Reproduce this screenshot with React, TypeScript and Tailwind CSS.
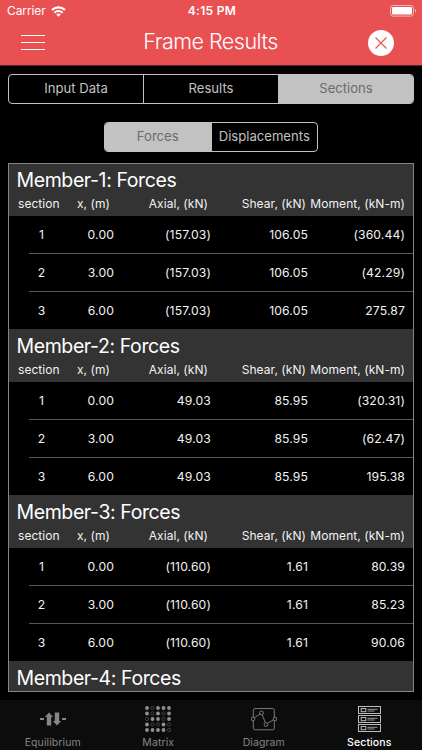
import React from "react";

type Row = [string, string, string, string, string];
type Member = { title: string; rows: Row[] };

const members: Member[] = [
  {
    title: "Member-1: Forces",
    rows: [
      ["1", "0.00", "(157.03)", "106.05", "(360.44)"],
      ["2", "3.00", "(157.03)", "106.05", "(42.29)"],
      ["3", "6.00", "(157.03)", "106.05", "275.87"],
    ],
  },
  {
    title: "Member-2: Forces",
    rows: [
      ["1", "0.00", "49.03", "85.95", "(320.31)"],
      ["2", "3.00", "49.03", "85.95", "(62.47)"],
      ["3", "6.00", "49.03", "85.95", "195.38"],
    ],
  },
  {
    title: "Member-3: Forces",
    rows: [
      ["1", "0.00", "(110.60)", "1.61", "80.39"],
      ["2", "3.00", "(110.60)", "1.61", "85.23"],
      ["3", "6.00", "(110.60)", "1.61", "90.06"],
    ],
  },
  { title: "Member-4: Forces", rows: [] },
];

function StatusBar() {
  return (
    <div className="grid h-[22px] grid-cols-3 items-center pl-[7px] pr-[5px] text-[12px] leading-none">
      <div className="flex items-center gap-[5px]">
        <span className="tracking-[-0.1px]">Carrier</span>
        <svg width="15" height="11" viewBox="0 0 15 11" fill="none" stroke="currentColor" strokeWidth="2.1">
          <path d="M1 4.1a9.2 9.2 0 0 1 13 0" />
          <path d="M3.4 6.7a5.8 5.8 0 0 1 8.2 0" />
          <path d="M7.5 10.8 5.2 8.5a3.3 3.3 0 0 1 4.6 0Z" fill="currentColor" stroke="none" />
        </svg>
      </div>
      <div className="text-center font-semibold tracking-[0.3px]">4:15 PM</div>
      <div className="flex justify-end">
        <svg width="27" height="12" viewBox="0 0 27 12" fill="none">
          <rect x="0.5" y="0.5" width="23" height="10.6" rx="2.6" stroke="#f7b5b5" />
          <rect x="2" y="2" width="20" height="7.6" rx="1.3" fill="#fff" />
          <path d="M25 4v3.6c1.6-.6 1.6-3 0-3.6Z" fill="#f7b5b5" />
        </svg>
      </div>
    </div>
  );
}

function Header() {
  return (
    <header className="h-[66px] shrink-0 border-b border-[#5a2023] bg-[#e95052] text-white">
      <StatusBar />
      <div className="grid h-[41px] grid-cols-[1fr_auto_1fr] items-center pl-[21px] pr-[28px]">
        <svg width="24" height="17" viewBox="0 0 24 17" stroke="#fff" strokeWidth="1">
          <path d="M0 1.5h24M0 8.5h24M0 15.5h24" />
        </svg>
        <h1 className="pb-[2px] pl-[6px] text-[21.5px] font-light leading-none tracking-[-0.5px]">Frame Results</h1>
        <svg className="justify-self-end" width="26" height="26" viewBox="0 0 26 26">
          <circle cx="13" cy="13" r="13" fill="#fff" />
          <path d="m7.5 7.5 11 11m0-11-11 11" stroke="#e95052" strokeWidth="1.1" />
        </svg>
      </div>
    </header>
  );
}

function Segmented({ items, active }: { items: string[]; active: number }) {
  return (
    <div className="flex h-[30px] overflow-hidden rounded-[4px] border border-[#c2c2c2] text-[13.1px]">
      {items.map((item, i) => (
        <div
          key={item}
          className={
            "flex flex-1 items-center justify-center " +
            (i > 0 ? "border-l border-[#c2c2c2] " : "") +
            (i === active ? "bg-[#c2c2c2] text-[#6b6b6b]" : "text-[#c2c2c2]")
          }
        >
          {item}
        </div>
      ))}
    </div>
  );
}

function MemberBlock({ title, rows }: Member) {
  return (
    <section>
      <div className="h-[53px] bg-[#333333] pt-[4px]">
        <h2 className="pl-[7.5px] text-[19.5px] leading-[26px] tracking-[-0.4px] text-white">{title}</h2>
        {rows.length > 0 && (
          <div className="grid grid-cols-[51px_50px_98px_98px_1fr] whitespace-nowrap pr-[8px] text-[12px] leading-[22px] tracking-[0.06px]">
            <span className="pl-[9px]">section</span>
            <span className="text-right">x, (m)</span>
            <span className="text-right">Axial, (kN)</span>
            <span className="text-right">Shear, (kN)</span>
            <span className="text-right">Moment, (kN-m)</span>
          </div>
        )}
      </div>
      {rows.map((row, i) => (
        <div key={row[0]} className={"pl-[20px] " + (i < rows.length - 1 ? "h-[38px]" : "h-[37px]")}>
          <div
            className={
              "grid h-full grid-cols-[31px_54px_97px_97px_1fr] items-center pr-[8px] pt-[2px] text-right text-[12.2px] tracking-[0.12px] " +
              (i < rows.length - 1 ? "border-b border-[#55585a]" : "")
            }
          >
            <span className="pr-[6px] text-center">{row[0]}</span>
            <span>{row[1]}</span>
            <span>{row[2]}</span>
            <span>{row[3]}</span>
            <span>{row[4]}</span>
          </div>
        </div>
      ))}
    </section>
  );
}

function EquilibriumIcon() {
  return (
    <svg width="26" height="26" viewBox="0 0 26 26" fill="#858585">
      <path d="M0 12h4v2H0ZM22 12h4v2h-4Z" />
      <path d="M9 6.5 13.1 11h-1.9v8.5H6.8V11H4.9Z" />
      <path d="M17 19.5 12.9 15h1.9V6.5h4.4V15h1.9Z" />
    </svg>
  );
}

const dots = ["10111", "10101", "01101", "10010", "11110"];

function MatrixIcon() {
  return (
    <svg width="26" height="26" viewBox="0 0 26 26">
      {dots.map((line, r) =>
        line.split("").map((d, c) => (
          <circle
            key={r + "-" + c}
            cx={2 + c * 5.5}
            cy={2 + r * 5.5}
            r={d === "1" ? 1.9 : 1.6}
            fill={d === "1" ? "#909090" : "none"}
            stroke={d === "1" ? "none" : "#606060"}
            strokeWidth="0.6"
          />
        ))
      )}
    </svg>
  );
}

function DiagramIcon() {
  return (
    <svg width="26" height="26" viewBox="0 0 26 26" fill="none" stroke="#858585" strokeWidth="0.9">
      <path d="M2.3 11V4.3a1.8 1.8 0 0 1 1.8-1.8h17.4a1.8 1.8 0 0 1 1.8 1.8V11M2.3 15v7a1.8 1.8 0 0 0 1.8 1.8h17.4a1.8 1.8 0 0 0 1.8-1.8v-7" />
      <path d="m3.6 11.7 5.5-3.8M11.2 8.8l3.2 7.8M16.7 17.2l5.4-3.1" />
      <circle cx="2" cy="13" r="1.8" />
      <circle cx="10.5" cy="6.9" r="1.9" />
      <circle cx="15" cy="18.5" r="1.9" />
      <circle cx="24" cy="13" r="1.8" />
    </svg>
  );
}

function SectionsIcon() {
  return (
    <svg width="24" height="26" viewBox="0 0 24 26" fill="none" stroke="#bdbdbd" strokeWidth="1">
      {[0, 9, 18].map((y) => (
        <g key={y}>
          <rect x="1.5" y={y + 0.5} width="22" height="7" />
          <rect x="4.2" y={y + 2.5} width="4.6" height="3.2" />
          <path d={"M10.5 " + (y + 3.3) + "h10M10.5 " + (y + 5) + "h7"} strokeWidth="0.8" />
        </g>
      ))}
    </svg>
  );
}

const tabs = [
  { label: "Equilibrium", icon: <EquilibriumIcon /> },
  { label: "Matrix", icon: <MatrixIcon /> },
  { label: "Diagram", icon: <DiagramIcon /> },
  { label: "Sections", icon: <SectionsIcon />, active: true },
];

export default function App() {
  return (
    <div className="flex h-[750px] w-[422px] flex-col overflow-hidden bg-black font-['Inter','Liberation_Sans',sans-serif] text-[#f2f2f2]">
      <Header />
      <div className="mx-[8px] mt-[8px]">
        <Segmented items={["Input Data", "Results", "Sections"]} active={2} />
      </div>
      <div className="ml-[104px] mt-[18px] w-[214px]">
        <Segmented items={["Forces", "Displacements"]} active={0} />
      </div>
      <main className="mx-[8px] mt-[11px] h-[529px] overflow-hidden border border-[#858585]">
        <div className="-mt-px">
          {members.map((m) => (
            <MemberBlock key={m.title} {...m} />
          ))}
        </div>
      </main>
      <nav className="mt-auto grid h-[50px] grid-cols-4 bg-[#0c0c0c] text-[10.5px] tracking-[0.1px]">
        {tabs.map((t) => (
          <div
            key={t.label}
            className={"flex flex-col items-center pt-[6px] " + (t.active ? "font-medium text-white" : "text-[#858585]")}
          >
            {t.icon}
            <span className="mt-[4px] leading-[14px]">{t.label}</span>
          </div>
        ))}
      </nav>
    </div>
  );
}
